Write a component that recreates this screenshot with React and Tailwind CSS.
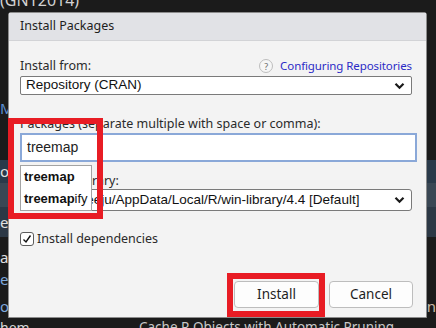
const ui = { fontFamily: '"Noto Sans", "Open Sans", sans-serif' };
const field = { fontFamily: '"Liberation Sans", Arial, sans-serif' };

const Chevron = () => (
  <svg width="11" height="8" viewBox="0 0 11 8" className="shrink-0">
    <path d="M1.5 1.8 L5.5 5.8 L9.5 1.8" fill="none" stroke="#1a1a1a" strokeWidth="2.2" />
  </svg>
);

const BgRow = ({ h, bg = "", left, leftCls = "text-[#d6d6d6]", right, rightCls = "text-[#c8c8c8]" }) => (
  <div className={`flex justify-between items-center ${h} ${bg}`}>
    <span className={`text-[15px] leading-none whitespace-nowrap ${leftCls}`}>{left}</span>
    <span className={`text-[15px] leading-none whitespace-nowrap ${rightCls}`}>{right}</span>
  </div>
);

export default function App() {
  return (
    <div className="relative w-[436px] h-[328px] overflow-hidden bg-[#1b1b1b]" style={ui}>
      {/* editor / packages pane behind the modal */}
      <div className="flex flex-col">
        <div className="h-[12px] flex items-end">
          <span className="text-[16px] leading-none text-[#d2d2d2] mb-[4px] whitespace-nowrap">(GN12014)</span>
        </div>
        <div className="h-[88px]" />
        <BgRow h="h-[16px]" left="M" leftCls="text-[#5d8fd4]" />
        <div className="h-[44px]" />
        <BgRow h="h-[23px]" bg="bg-[#2a3a4a]" left="o" leftCls="text-[#e0e0e0]" />
        <BgRow h="h-[24px]" bg="bg-[#3a4754]" />
        <BgRow h="h-[30px]" bg="bg-[#2c3845]" left="e" leftCls="text-[#e0e0e0]" />
        <div className="h-[9px]" />
        <BgRow h="h-[22px]" left="a" leftCls="text-[#e0e0e0]" />
        <BgRow h="h-[22px]" left="e6" leftCls="text-[#7fa8dc]" />
        <div className="h-[5px]" />
        <BgRow h="h-[22px]" left="o" leftCls="text-[#7fa8dc]" right="rn" rightCls="text-[#c9b9a6]" />
        <div className="h-[20px] flex items-start pt-[4px] whitespace-nowrap">
          <span className="w-[139px] shrink-0 text-[14px] leading-none text-[#d6d6d6]">hem</span>
          <span className="text-[13.5px] leading-none text-[#c8c8c8]">Cache R Objects with Automatic Pruning</span>
        </div>
      </div>

      {/* modal dialog */}
      <div className="absolute left-[8px] top-[12px] w-[419px] h-[306px] flex flex-col bg-[#f3f3f3] border border-[#8c8c8c] rounded-tl-[3px] rounded-tr-[3px]">
        <div className="h-[28px] shrink-0 flex items-center pl-[11px] bg-[#e1e2e6] border-b border-[#d2d3d6] text-[12.5px] text-[#1e1e1e]">
          Install Packages
        </div>

        <div className="flex flex-col flex-1 pl-[11px] pr-[9px]">
          <div className="flex items-center justify-between h-[16px] mt-[17px] pr-[5px]">
            <span className="text-[12.5px] text-[#2a2a2a]">Install from:</span>
            <div className="flex items-center gap-[7px]">
              <span className="w-[14px] h-[14px] rounded-full border border-[#bdbdbd] bg-[#f6f6f6] flex items-center justify-center text-[9px] leading-none text-[#6d6d6d]">
                ?
              </span>
              <span className="text-[11.5px] tracking-[-0.1px] text-[#2b2bc6]">Configuring Repositories</span>
            </div>
          </div>
          <div className="mt-[2px] mr-[5px] h-[19px] bg-white border border-[#7a7a7a] rounded-[2px] flex items-center justify-between pl-[5px] pr-[6px]" style={field}>
            <span className="text-[13.5px] text-[#111]">Repository (CRAN)</span>
            <Chevron />
          </div>

          <div className="mt-[21px] h-[16px] flex items-center text-[12.5px] text-[#2a2a2a]">
            Packages (separate multiple with space or comma):
          </div>
          <div className="mt-[1px] h-[29px] bg-white border-2 border-[#8aa8d8] flex items-center pl-[5px]" style={field}>
            <span className="text-[14px] text-[#222]">treemap</span>
          </div>

          <div className="mt-[12px] h-[15px] flex items-center text-[12.5px] text-[#2a2a2a]">
            Install to Library:
          </div>
          <div className="mt-0 mr-[5px] h-[22px] bg-white border border-[#7a7a7a] rounded-[3px] flex items-center justify-between pl-[6px] pr-[6px]" style={field}>
            <span className="text-[13.5px] text-[#111]">C:/Users/leeju/AppData/Local/R/win-library/4.4 [Default]</span>
            <Chevron />
          </div>

          <label className="mt-[20px] h-[16px] flex items-center gap-[3px]">
            <span className="w-[14px] h-[14px] bg-white border border-[#5c5c5c] rounded-[3px] flex items-center justify-center">
              <svg width="10" height="10" viewBox="0 0 10 10">
                <path d="M1.5 5.5 L4 8 L8.5 1.5" fill="none" stroke="#111" strokeWidth="1.4" />
              </svg>
            </span>
            <span className="text-[12.5px] text-[#2a2a2a]">Install dependencies</span>
          </label>

          <div className="mt-auto mb-[9px] flex justify-end gap-[10px] pr-[4px]">
            <button className="w-[85px] h-[27px] rounded-[4px] border border-[#bdbdbd] bg-[#fdfdfd] text-[13.5px] text-[#1e1e1e]">
              Install
            </button>
            <button className="w-[84px] h-[27px] rounded-[4px] border border-[#bdbdbd] bg-[#fdfdfd] text-[13.5px] text-[#1e1e1e]">
              Cancel
            </button>
          </div>
        </div>

        {/* autocomplete popup */}
        <div className="absolute left-[11px] top-[152px] w-[72px] h-[46px] bg-white border border-[#a3a3a3] flex flex-col justify-center gap-[4px] pl-[3px]" style={field}>
          <span className="text-[13px] leading-[18px] font-bold text-[#111]">treemap</span>
          <span className="text-[13px] leading-[18px] text-[#111]">
            <b>treemap</b>ify
          </span>
        </div>
      </div>

      {/* annotation boxes */}
      <div className="absolute left-[8px] top-[118px] w-[95px] h-[101px] border-[6px] border-[#e81c24]" />
      <div className="absolute left-[227px] top-[273px] w-[98px] h-[44px] border-[6px] border-[#e81c24]" />
    </div>
  );
}
